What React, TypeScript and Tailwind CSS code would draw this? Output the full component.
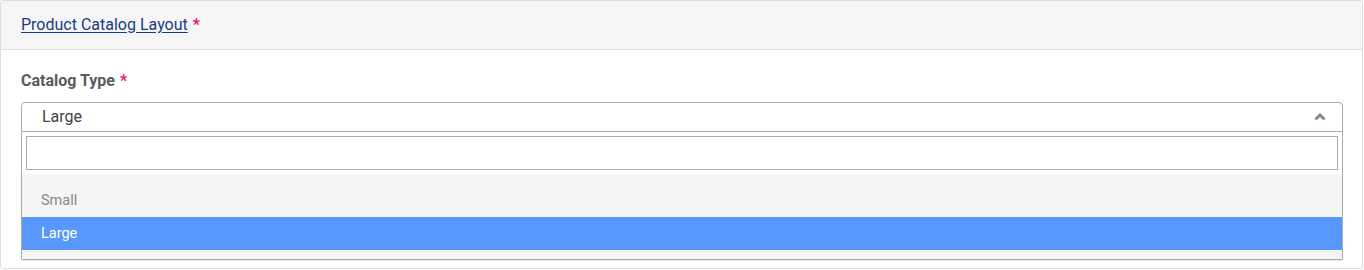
export default function App() {
  return (
    <div className="bg-white font-['Roboto',sans-serif] w-[1364px] h-[270px]">
      <div className="w-[1363px] h-[269px] border border-[#dddddd] rounded-[3px] overflow-hidden">
        {/* Header */}
        <div className="h-[49px] bg-[#f6f6f6] border-b border-[#dddddd] px-[20px] flex items-center">
          <a href="#" className="text-[16px] text-[#1c3a87] underline underline-offset-2">
            Product Catalog Layout
          </a>
          <span className="ml-[5px] text-[16px] font-bold text-[#e8185f]">*</span>
        </div>

        {/* Body */}
        <div className="px-[20px] pt-[21px]">
          <div className="flex items-center h-[20px] mb-[11px]">
            <span className="text-[16px] font-bold text-[#5b5b5b]">Catalog Type</span>
            <span className="ml-[5px] text-[16px] font-bold text-[#e8185f]">*</span>
          </div>

          <div className="w-[1322px]">
            {/* Selected value */}
            <div className="h-[30px] border border-[#aaaaaa] rounded-t-[4px] flex items-center justify-between pl-[20px] pr-[16px]">
              <span className="text-[16px] text-[#444444]">Large</span>
              <svg width="12" height="8" viewBox="0 0 12 8">
                <polyline points="1.5,6.5 6,2 10.5,6.5" fill="none" stroke="#888888" strokeWidth="3" />
              </svg>
            </div>

            {/* Dropdown */}
            <div className="border-x border-b border-[#aaaaaa] rounded-b-[2px] shadow-[0_1px_1px_rgba(0,0,0,0.1)]">
              <div className="p-[4px]">
                <div className="h-[34px] border border-[#aaaaaa]" />
              </div>
              <div className="bg-[#f5f5f5] pt-[10px] pb-[9px]">
                <div className="h-[33px] flex items-center px-[19px] text-[14.5px] text-[#888888]">Small</div>
                <div className="h-[33px] flex items-center px-[19px] text-[14.5px] text-white bg-[#5897fb]">Large</div>
              </div>
            </div>
          </div>
        </div>
      </div>
    </div>
  );
}
